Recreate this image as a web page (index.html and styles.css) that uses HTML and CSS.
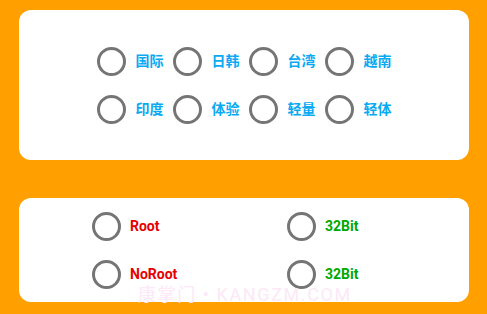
FILE: index.html
```html
<!DOCTYPE html>
<html lang="zh">
<head>
<meta charset="utf-8">
<link rel="stylesheet" href="styles.css">
</head>
<body>
<div class="page">
  <section class="card card-region">
    <div class="region-grid">
      <label class="radio"><span class="dot"></span><span class="label blue">国际</span></label>
      <label class="radio"><span class="dot"></span><span class="label blue">日韩</span></label>
      <label class="radio"><span class="dot"></span><span class="label blue">台湾</span></label>
      <label class="radio"><span class="dot"></span><span class="label blue">越南</span></label>
      <label class="radio"><span class="dot"></span><span class="label blue">印度</span></label>
      <label class="radio"><span class="dot"></span><span class="label blue">体验</span></label>
      <label class="radio"><span class="dot"></span><span class="label blue">轻量</span></label>
      <label class="radio"><span class="dot"></span><span class="label blue">轻体</span></label>
    </div>
  </section>
  <section class="card card-mode">
    <div class="mode-grid">
      <label class="radio radio-sm"><span class="dot"></span><span class="label red">Root</span></label>
      <label class="radio radio-sm"><span class="dot"></span><span class="label green">32Bit</span></label>
      <label class="radio radio-sm"><span class="dot"></span><span class="label red">NoRoot</span></label>
      <label class="radio radio-sm"><span class="dot"></span><span class="label green">32Bit</span></label>
    </div>
  </section>
  <div class="watermark">康掌门 • KANGZM.COM</div>
</div>
</body>
</html>
```
FILE: styles.css
```css
* { box-sizing: border-box; }
html, body { margin: 0; padding: 0; }
body {
  background: #FFA000;
  font-family: Roboto, "Noto Sans CJK SC", sans-serif;
  width: 487px;
  height: 314px;
  overflow: hidden;
}
.page {
  position: relative;
  padding: 10px 18px 0 19px;
}
.card {
  background: #ffffff;
  border-radius: 12px;
  width: 450px;
}
.card-region {
  height: 150px;
  display: flex;
  align-items: center;
  justify-content: center;
}
.region-grid {
  display: grid;
  grid-template-columns: repeat(4, auto);
  grid-auto-rows: 48px;
  column-gap: 9px;
}
.card-mode {
  margin-top: 38px;
  height: 104px;
  display: flex;
  align-items: center;
  padding-left: 73px;
}
.mode-grid {
  display: grid;
  grid-template-columns: 195px auto;
  grid-auto-rows: 48px;
}
.radio {
  display: flex;
  align-items: center;
  gap: 10px;
}
.radio-sm { gap: 9px; }
.dot {
  width: 29px;
  height: 29px;
  border: 3px solid #757575;
  border-radius: 50%;
  flex: none;
}
.label {
  font-size: 14px;
  font-weight: 700;
  line-height: 20px;
}
.blue { color: #0AAAF2; }
.red { color: #E60000; }
.green { color: #00A800; }
.watermark {
  position: absolute;
  left: 138px;
  top: 280px;
  font-size: 18px;
  letter-spacing: 1.6px;
  color: #FCE8F7;
  white-space: nowrap;
  pointer-events: none;
}
```
